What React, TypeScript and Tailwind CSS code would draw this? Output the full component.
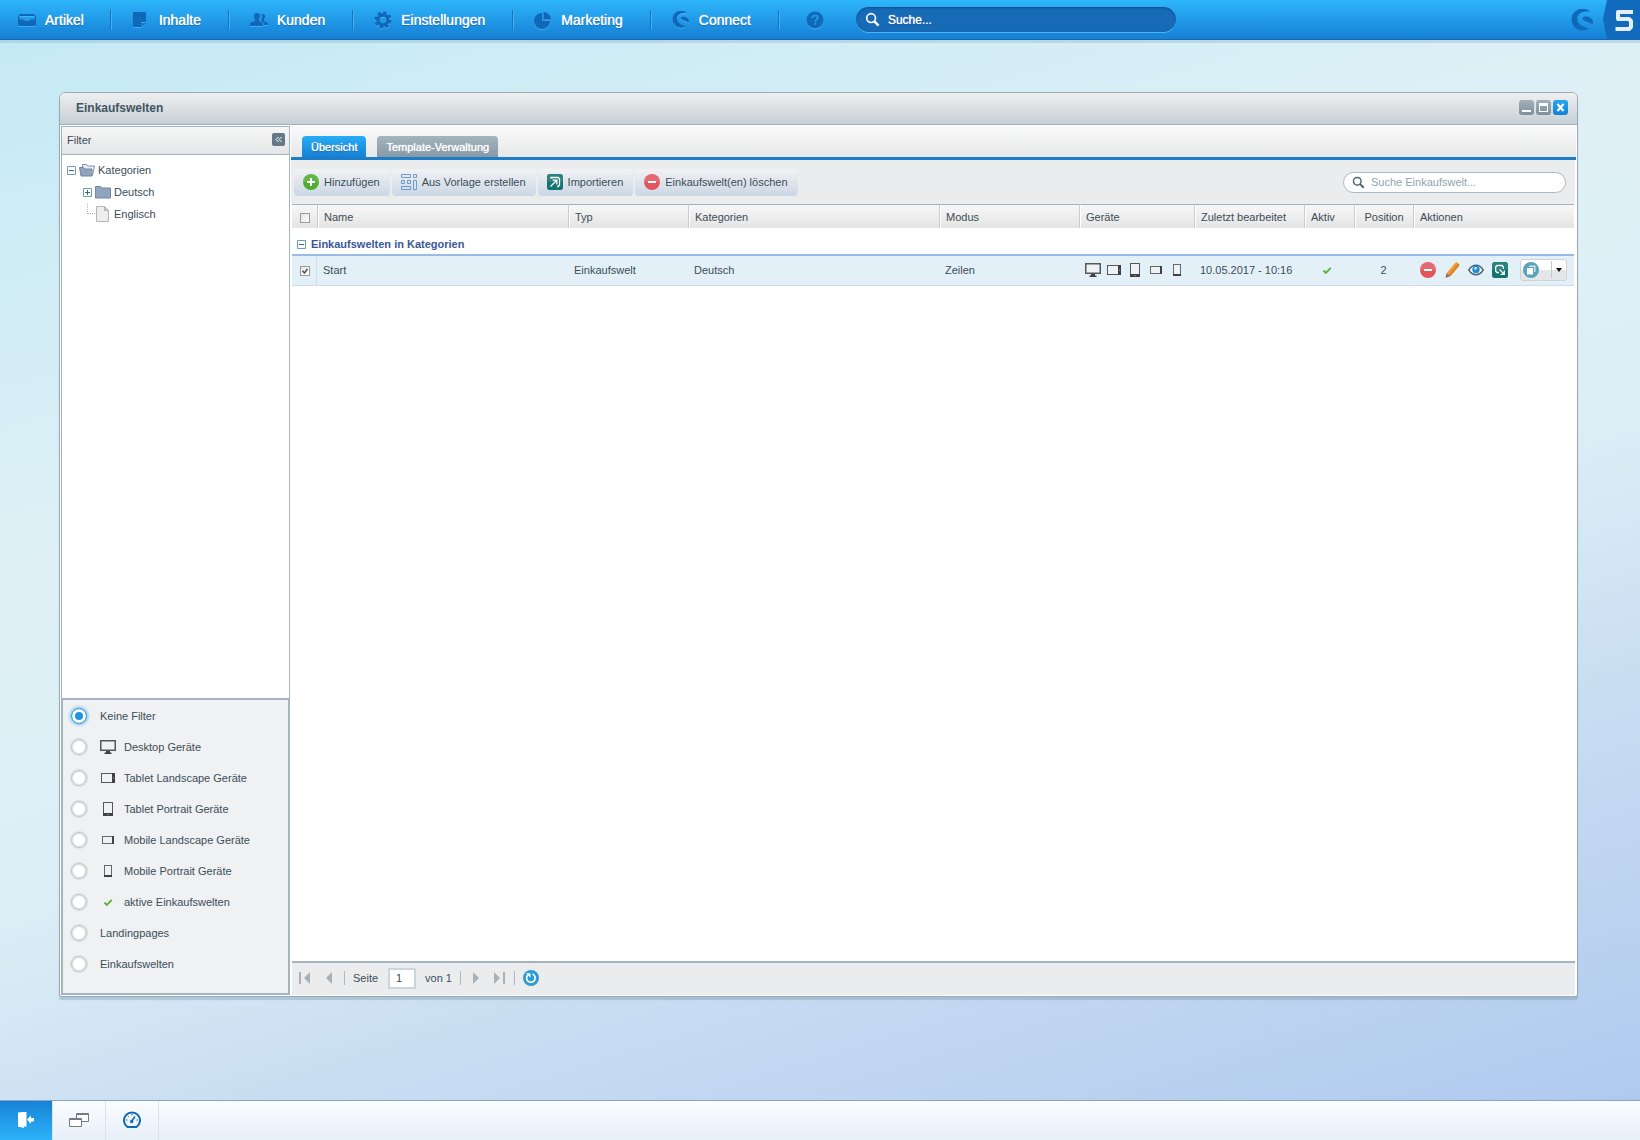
import type { ReactNode } from 'react';

const LABEL = 'text-[11px] leading-4';
const WHITE_GLOW = '[text-shadow:0_0_1px_rgba(255,255,255,1),0_1px_1px_rgba(0,50,110,0.6)]';

type DeviceKind = 'desktop' | 'tabletLandscape' | 'tabletPortrait' | 'mobileLandscape' | 'mobilePortrait';

function DeviceIcon({ kind }: { kind: DeviceKind }) {
  return (
    <svg viewBox="0 0 16 16" className="size-4 shrink-0" fill="none" aria-hidden>
      {kind === 'desktop' && (
        <>
          <rect x="0.75" y="1.75" width="14.5" height="9.5" fill="#eef2f4" stroke="#55585b" strokeWidth="1.5" />
          <path d="M6 12h4v1.500h1.500V15h-7v-1.500H6z" fill="#3f4245" />
        </>
      )}
      {kind === 'tabletLandscape' && (
        <>
          <rect x="1.5" y="3.5" width="13" height="9" fill="#eef2f4" stroke="#55585b" />
          <path d="M12 3h3v10h-3z" fill="#3f4245" />
          <path d="M13 7.5h1v1h-1z" fill="#aaa" />
        </>
      )}
      {kind === 'tabletPortrait' && (
        <>
          <rect x="3.5" y="1.5" width="9" height="13" fill="#eef2f4" stroke="#55585b" />
          <path d="M3 12h10v3H3z" fill="#3f4245" />
          <path d="M7.5 13h1v1h-1z" fill="#aaa" />
        </>
      )}
      {kind === 'mobileLandscape' && (
        <>
          <rect x="2.5" y="4.5" width="11" height="7" fill="#eef2f4" stroke="#66696c" />
          <path d="M12 4h2v8h-2z" fill="#3f4245" />
        </>
      )}
      {kind === 'mobilePortrait' && (
        <>
          <rect x="4.5" y="2.5" width="7" height="11" fill="#eef2f4" stroke="#66696c" />
          <path d="M4 12h8v2H4z" fill="#3f4245" />
        </>
      )}
    </svg>
  );
}

function CheckIcon() {
  return (
    <svg viewBox="0 0 16 16" className="size-4 shrink-0" fill="none" aria-hidden>
      <path d="M4.5 8.5l2.3 2.3 5-5" stroke="#5cb13a" strokeWidth="1.9" />
    </svg>
  );
}

function CircleIcon({ plus = false }: { plus?: boolean }) {
  return (
    <svg viewBox="0 0 16 16" className="size-4 shrink-0" aria-hidden>
      <circle cx="8" cy="8" r="8" fill={plus ? '#4fae2e' : '#e2555a'} />
      <path d="M0 8a8 8 0 0 1 16 0z" fill="#fff" opacity="0.12" />
      <path d={plus ? 'M7 4h2v3h3v2H9v3H7V9H4V7h3z' : 'M4 7h8v2H4z'} fill="#fff" />
    </svg>
  );
}

function TemplateIcon() {
  return (
    <svg viewBox="0 0 16 16" className="size-4 shrink-0" fill="none" stroke="#6f9bcb" aria-hidden>
      <path d="M.5.5h9v3h-9zM12.5.5h3v3h-3zM.5 6.5h3v3h-3zM6.5 6.5h3v3h-3zM12.5 6.5h3v9h-3zM.5 12.5h9v3h-9z" />
    </svg>
  );
}

function TealIcon({ out = false }: { out?: boolean }) {
  return (
    <svg viewBox="0 0 16 16" className="size-4 shrink-0" fill="none" stroke="#fff" strokeWidth="1.3" aria-hidden>
      <rect width="16" height="16" rx="2.5" fill="#14746f" stroke="none" />
      <rect width="16" height="8" rx="2.5" fill="#fff" stroke="none" opacity="0.1" />
      {out ? (
        <>
          <path d="M7 10.5H5L3.700 9.200V4.800L5 3.500h5L11.300 4.800V7" />
          <path d="M7.500 7.500l4.500 4.500M12.300 8.500v3.800H8.500" />
        </>
      ) : (
        <>
          <path d="M4 4.800V3.500h7.200l1.300 1.300V11l-1.300 1.500H10" />
          <path d="M3.500 12.500l6-6M5.500 6.200h4.300v4.300" />
        </>
      )}
    </svg>
  );
}

function PencilIcon() {
  return (
    <svg viewBox="0 0 16 16" className="size-4 shrink-0" aria-hidden>
      <path d="M11 1l1.500-.8 3 2L15 4 6.500 14l-4-2.800z" fill="#f0a030" />
      <path d="M13.500 1.500l1.800 1.300L15 4 6.500 14l-1.800-1.300z" fill="#d9852b" />
      <path d="M2.500 11.200l4 2.800L1.500 16z" fill="#8a6b55" />
    </svg>
  );
}

function EyeIcon() {
  return (
    <svg viewBox="0 0 16 16" className="size-4 shrink-0" aria-hidden>
      <path d="M.8 8C3 4.600 5.300 3.300 8 3.300S13 4.600 15.200 8C13 11.400 10.700 12.700 8 12.700S3 11.400.8 8z" fill="#fff" stroke="#4a6474" strokeWidth="1.4" />
      <circle cx="8" cy="7.500" r="3.700" fill="#1d8fd3" />
      <circle cx="7.500" cy="6.300" r="1.400" fill="#bfe5fa" />
    </svg>
  );
}

function Magnifier({ className }: { className: string }) {
  return (
    <svg viewBox="0 0 16 16" className={className} fill="none" stroke="currentColor" aria-hidden>
      <circle cx="6.5" cy="6.5" r="4.7" strokeWidth="1.8" />
      <path d="M10 10l4.500 4.500" strokeWidth="2.6" />
    </svg>
  );
}

function ShopwareShape() {
  return (
    <>
      <path d="M19.500 3C13 1.500 6.500 4 6.300 9.500 6.200 14.500 11 18 18 19.500A11 11 0 1 1 19.500 3z" />
      <path d="M11.500 9.500C11 6.500 20 6.500 22 12l-.5 3.500C19 12.800 12.200 12.500 11.500 9.500z" />
    </>
  );
}

function FolderIcon({ open = false }: { open?: boolean }) {
  return (
    <svg viewBox="0 0 16 14" className="h-3.5 w-4 shrink-0" aria-hidden>
      {open && <path d="M3.500 5V1.500h4l1 1.500h7l-2 9.500" fill="#e9eef3" stroke="#8196ad" />}
      <path d={open ? 'M.5 4.500h4l1 1.500h7.500v7H2z' : 'M.5 1.500h5L7 3h8.500v10H.5z'} fill="#8fa5bf" stroke="#7388a1" />
    </svg>
  );
}

function FileIcon() {
  return (
    <svg viewBox="0 0 16 16" className="size-4 shrink-0" aria-hidden>
      <path d="M1.500.5h8l4 4v11h-12z" fill="#ededed" stroke="#b5b5b5" />
      <path d="M9.500.5v4h4z" fill="#c9c9c9" stroke="#b5b5b5" />
    </svg>
  );
}

function ToggleBox({ plus = false }: { plus?: boolean }) {
  return (
    <svg viewBox="0 0 9 9" className="size-[9px] shrink-0 bg-white" fill="none" aria-hidden>
      <path d="M.5.5h8v8h-8z" stroke="#6f9db8" />
      <path d={plus ? 'M2 4.500h5M4.500 2v5' : 'M2 4.500h5'} stroke="#2b6e93" />
    </svg>
  );
}

const NAV: { label: string; icon: ReactNode }[] = [
  {
    label: 'Artikel',
    icon: <path d="M2 3h14l2 2.500V14l-1 1H1l-1-1V5.500zM1.500 5v3.500H5L7 10h4l2-1.500h3.500V5z" fillRule="evenodd" />,
  },
  { label: 'Inhalte', icon: <path d="M1 1h13v10H9.500v5H1zM10.500 12H14l-3.500 3.500z" /> },
  {
    label: 'Kunden',
    icon: (
      <path d="M7 2c2 0 3.200 1.400 3.100 3.300C10 7 9.400 7.800 9 8.200v2.100c1.800.8 3.800 1.200 3.800 2.700v2H0v-2c0-1.500 2.500-1.900 4.800-2.700V8.200c-.4-.4-1-1.200-1.100-2.900C3.600 3.400 4.800 2 7 2zm5.500 1c1.800 0 2.700 1.200 2.600 2.800-.1 1.500-.6 2.200-1 2.600v1.900c2 .6 3.900.9 3.900 2.500V14h-4.100c0-2-1-3-2.900-3.800.8-1.700 1.200-4.200.4-7z" />
    ),
  },
  {
    label: 'Einstellungen',
    icon: (
      <>
        <circle cx="9" cy="9" r="5" fill="none" stroke="currentColor" strokeWidth="3.4" />
        <circle cx="9" cy="9" r="7.4" fill="none" stroke="currentColor" strokeWidth="2.4" strokeDasharray="3.3 2.512" />
      </>
    ),
  },
  {
    label: 'Marketing',
    icon: <path d="M8 2v8h8A8 8 0 1 1 8 2zM9.500 1A7.500 7.500 0 0 1 17 8.500H9.500z" />,
  },
  {
    label: 'Connect',
    icon: (
      <g transform="scale(.77)">
        <ShopwareShape />
      </g>
    ),
  },
];

function TopBar() {
  return (
    <header className="flex h-10 items-center border-b border-[#0f68b8] bg-linear-to-b from-[#2eb6fb] to-[#167fd5] shadow-[0_3px_0_rgba(120,160,175,0.28)]">
      <nav className="flex items-center">
        {NAV.map((item, index) => (
          <button
            key={item.label}
            type="button"
            className={`flex h-5 items-center border-r border-[#49b0f2] shadow-[-1px_0_0_#1672c4_inset] ${index === 0 ? 'pr-[27px] pl-[18px]' : 'pr-7 pl-5'}`}
          >
            <svg
              viewBox="0 0 18 18"
              className="mr-[9px] size-[18px] fill-current text-[#0f68b9] drop-shadow-[0_1px_0_rgba(120,205,255,0.45)]"
              aria-hidden
            >
              {item.icon}
            </svg>
            <span className={`text-sm text-white ${WHITE_GLOW}`}>{item.label}</span>
          </button>
        ))}
      </nav>
      <button type="button" aria-label="Hilfe" className="ml-[26px] text-[#0f68b9]">
        <svg viewBox="0 0 18 18" className="size-[18px] drop-shadow-[0_1px_0_rgba(120,205,255,0.45)]" aria-hidden>
          <circle cx="9" cy="9" r="8.5" fill="currentColor" />
          <path d="M6.200 7c0-1.700 1.300-2.500 2.800-2.500s2.800.9 2.800 2.300c0 1.700-2.600 1.700-2.600 3.900" fill="none" stroke="#2596e6" strokeWidth="2" />
          <path d="M8.200 11.800h2v2h-2z" fill="#2596e6" />
        </svg>
      </button>
      <label className="ml-8 flex h-[25px] w-80 items-center rounded-full bg-[#176ab6] pl-[9px] shadow-[0_1px_0_#4db2f3,0_1px_2px_rgba(0,40,90,0.4)_inset]">
        <Magnifier className="size-[15px] text-white" />
        <input
          aria-label="Suche"
          placeholder="Suche..."
          className={`ml-2 w-60 bg-transparent text-xs text-white outline-none placeholder:text-white placeholder:opacity-100 ${WHITE_GLOW}`}
        />
      </label>
      <svg viewBox="0 0 22 22" className="ml-auto size-[22px] fill-[#0f68b9]" aria-hidden>
        <ShopwareShape />
      </svg>
      <svg viewBox="0 0 37 39" className="ml-2.5 h-[39px] w-[37px]" aria-hidden>
        <path d="M4 0h33v39H4L0 19z" fill="#116abb" />
        <path d="M30 12H15v7h11l2 2v6l-2 2H12.500" fill="none" stroke="#e4eff9" strokeWidth="4" strokeLinejoin="round" />
      </svg>
    </header>
  );
}

function TitleBar() {
  return (
    <div className="flex h-8 items-center rounded-t-[5px] border-b border-[#9db0bf] bg-linear-to-b from-[#efefef] to-[#c6cfd6] pr-[9px] pb-0.5 pl-4">
      <h1 className="grow text-xs font-bold text-[#42555f]">Einkaufswelten</h1>
      <div className="flex gap-0.5">
        <button type="button" aria-label="Minimieren" className="size-[15px] rounded-[3px] bg-linear-to-b from-[#a2b0ba] to-[#7e909d]">
          <svg viewBox="0 0 15 15" className="size-full"><path d="M3 10h9v2H3z" fill="#fff" /></svg>
        </button>
        <button type="button" aria-label="Maximieren" className="size-[15px] rounded-[3px] bg-linear-to-b from-[#a2b0ba] to-[#7e909d]">
          <svg viewBox="0 0 15 15" className="size-full"><path d="M3 3h9v9H3zm1 3v5h7V6z" fill="#fff" fillRule="evenodd" /></svg>
        </button>
        <button type="button" aria-label="Schließen" className="size-[15px] rounded-[3px] bg-linear-to-b from-[#27a8f2] to-[#0f80d4]">
          <svg viewBox="0 0 15 15" className="size-full"><path d="M4.500 4l6 7M10.500 4l-6 7" stroke="#fff" strokeWidth="2.2" /></svg>
        </button>
      </div>
    </div>
  );
}

const FILTERS: { label: string; icon?: DeviceKind | 'check' }[] = [
  { label: 'Keine Filter' },
  { label: 'Desktop Geräte', icon: 'desktop' },
  { label: 'Tablet Landscape Geräte', icon: 'tabletLandscape' },
  { label: 'Tablet Portrait Geräte', icon: 'tabletPortrait' },
  { label: 'Mobile Landscape Geräte', icon: 'mobileLandscape' },
  { label: 'Mobile Portrait Geräte', icon: 'mobilePortrait' },
  { label: 'aktive Einkaufswelten', icon: 'check' },
  { label: 'Landingpages' },
  { label: 'Einkaufswelten' },
];

function Sidebar() {
  return (
    <aside className="flex w-[229px] shrink-0 flex-col border border-[#a3b3bf]">
      <div className="flex h-7 items-center border-b border-[#a3b3bf] bg-linear-to-b from-[#f7f7f7] to-[#e4e5e6] pr-1 pb-0.5 pl-[5px]">
        <h2 className={`grow ${LABEL}`}>Filter</h2>
        <button type="button" aria-label="Filter einklappen" className="size-[13px] rounded-xs bg-[#64788a]">
          <svg viewBox="0 0 13 13" className="size-full" fill="none" stroke="#fff">
            <path d="M6.500 4L4 6.500 6.500 9M9.500 4L7 6.500 9.500 9" />
          </svg>
        </button>
      </div>
      <ul className={`grow bg-white pt-1 pl-[5px] ${LABEL}`}>
        <li>
          <div className="flex h-[22px] items-center">
            <ToggleBox />
            <span className="mx-[3px] flex"><FolderIcon open /></span>
            Kategorien
          </div>
          <ul className="pl-4">
            <li className="flex h-[22px] items-center">
              <ToggleBox plus />
              <span className="mx-[3px] flex"><FolderIcon /></span>
              Deutsch
            </li>
            <li className="flex h-[22px] items-center">
              <span className="mb-[11px] ml-1 h-[11px] w-2 border-b border-l border-dotted border-[#b5b5b5]" />
              <span className="mr-[3px] flex"><FileIcon /></span>
              Englisch
            </li>
          </ul>
        </li>
      </ul>
      <fieldset className="h-[296px] border border-t-2 border-[#a3b3bf] bg-[#eff1f3]">
        {FILTERS.map((filter, index) => (
          <label key={filter.label} className={`flex h-[31px] items-center pl-2 ${LABEL}`}>
            <input
              type="radio"
              name="filter"
              defaultChecked={index === 0}
              className="mr-[13px] size-4 appearance-none rounded-full border border-[#c3c8cd] bg-white shadow-[0_0_1px_1px_#dcdfe2,0_0_1px_1px_#dcdfe2_inset] checked:border-[#4ba6e0] checked:bg-[#1e94dc] checked:shadow-[0_0_2px_2px_#a5d5f5,0_0_0_3px_#fff_inset]"
            />
            {filter.icon && (
              <span className="mr-2 flex">
                {filter.icon === 'check' ? <CheckIcon /> : <DeviceIcon kind={filter.icon} />}
              </span>
            )}
            {filter.label}
          </label>
        ))}
      </fieldset>
    </aside>
  );
}

const TOOLS: { label: string; icon: ReactNode }[] = [
  { label: 'Hinzufügen', icon: <CircleIcon plus /> },
  { label: 'Aus Vorlage erstellen', icon: <TemplateIcon /> },
  { label: 'Importieren', icon: <TealIcon /> },
  { label: 'Einkaufswelt(en) löschen', icon: <CircleIcon /> },
];

function Toolbar() {
  return (
    <div className="flex h-11 items-center justify-between border-r border-white bg-[#ebecee] pr-[9px] pl-[3px]">
      <div className="flex gap-0.5">
        {TOOLS.map((tool) => (
          <button
            key={tool.label}
            type="button"
            className={`flex h-[27px] items-center gap-[5px] rounded-[4px] bg-linear-to-b from-[#f1f2f4] to-[#cbd7e5] pr-2.5 pl-[9px] ${LABEL}`}
          >
            {tool.icon}
            {tool.label}
          </button>
        ))}
      </div>
      <label className="flex h-[21px] w-[223px] items-center rounded-full border border-[#a9bac7] bg-white pl-2">
        <Magnifier className="size-[13px] text-[#4f6676]" />
        <input
          aria-label="Suche Einkaufswelt"
          placeholder="Suche Einkaufswelt..."
          className={`ml-1.5 w-44 bg-transparent outline-none placeholder:text-[#8fa3b1] placeholder:opacity-100 ${LABEL}`}
        />
      </label>
    </div>
  );
}

function RowCheckbox({ label, checked = false }: { label: string; checked?: boolean }) {
  return (
    <span className="relative block size-2.5">
      <input
        type="checkbox"
        aria-label={label}
        defaultChecked={checked}
        className="peer block size-2.5 appearance-none border border-[#9a9a9a] bg-linear-to-br from-[#e4e4e4] to-white"
      />
      <svg
        viewBox="0 0 10 10"
        className="pointer-events-none absolute inset-0 hidden size-2.5 peer-checked:block"
        fill="none"
        stroke="#444"
        aria-hidden
      >
        <path d="M2.500 4.800l2 2.200 3-4" strokeWidth="1.3" />
      </svg>
    </span>
  );
}

const COLUMNS = ['Name', 'Typ', 'Kategorien', 'Modus', 'Geräte', 'Zuletzt bearbeitet', 'Aktiv', 'Position', 'Aktionen'];
const DEVICES: DeviceKind[] = ['desktop', 'tabletLandscape', 'tabletPortrait', 'mobileLandscape', 'mobilePortrait'];

function Grid() {
  return (
    <table className={`w-full table-fixed border-separate border-spacing-0 ${LABEL}`}>
      <colgroup>
        <col className="w-[25px]" />
        <col className="w-[251px]" />
        <col className="w-[120px]" />
        <col className="w-[251px]" />
        <col className="w-[140px]" />
        <col className="w-[115px]" />
        <col className="w-[110px]" />
        <col className="w-[50px]" />
        <col className="w-[59px]" />
        <col />
      </colgroup>
      <thead>
        <tr className="h-6 bg-linear-to-b from-[#f8f8f8] to-[#e4e4e5]">
          <th className="border-t border-[#a3b3bf] pt-0.5 pl-2">
            <RowCheckbox label="Alle auswählen" />
          </th>
          {COLUMNS.map((column) => (
            <th
              key={column}
              className={`border-t border-l border-t-[#a3b3bf] border-l-[#c9cccf] font-normal whitespace-nowrap shadow-[1px_0_0_#fff_inset] ${column === 'Position' ? 'text-center' : 'pl-1.5 text-left'}`}
            >
              {column}
            </th>
          ))}
        </tr>
      </thead>
      <tbody>
        <tr className="h-7">
          <th colSpan={10} className="border-b-2 border-[#99bbe8] pt-1.5 text-left">
            <button type="button" className="flex items-center gap-[5px] pl-[5px] font-bold text-[#3a5795]">
              <ToggleBox />
              Einkaufswelten in Kategorien
            </button>
          </th>
        </tr>
        <tr className="h-[30px] bg-[#e4f0f7] *:border-b *:border-[#cddfeb] *:pb-0.5">
          <td className="border-r border-r-[#d3e0ea] pt-0.5 pl-2">
            <RowCheckbox label="Start auswählen" checked />
          </td>
          <td className="pl-1.5">Start</td>
          <td className="pl-1.5">Einkaufswelt</td>
          <td className="pl-1.5">Deutsch</td>
          <td className="pl-1.5">Zeilen</td>
          <td className="pl-1.5">
            <span className="flex gap-[5px]">
              {DEVICES.map((kind) => (
                <DeviceIcon key={kind} kind={kind} />
              ))}
            </span>
          </td>
          <td className="pl-1.5 whitespace-nowrap">10.05.2017 - 10:16</td>
          <td className="pl-[15px]">
            <CheckIcon />
          </td>
          <td className="text-center">2</td>
          <td className="pl-[7px]">
            <span className="flex items-center gap-2">
              <button type="button" aria-label="Löschen"><CircleIcon /></button>
              <button type="button" aria-label="Bearbeiten"><PencilIcon /></button>
              <button type="button" aria-label="Vorschau"><EyeIcon /></button>
              <button type="button" aria-label="Exportieren"><TealIcon out /></button>
              <button
                type="button"
                aria-label="Duplizieren"
                className="ml-1 flex h-[22px] w-[47px] items-center rounded-[3px] border border-[#d0d3d6] bg-linear-to-b from-white from-50% to-[#e6e6e8] to-50% pl-0.5"
              >
                <svg viewBox="0 0 16 16" className="size-4" aria-hidden>
                  <circle cx="8" cy="8" r="8" fill="#5aa3b8" />
                  <path d="M6 3.500h6.500V10H11V5H6z" fill="#cfe5ec" />
                  <path d="M4 6h6v6.500H4z" fill="#fff" />
                </svg>
                <span className="ml-3 h-[17px] w-px bg-[#c6c9cc]" />
                <svg viewBox="0 0 6 4" className="ml-1 h-1 w-1.5" aria-hidden><path d="M0 0h6L3 4z" fill="#111" /></svg>
              </button>
            </span>
          </td>
        </tr>
      </tbody>
    </table>
  );
}

function PagingButton({ label, d, className }: { label: string; d: string; className?: string }) {
  return (
    <button type="button" aria-label={label} className={className}>
      <svg viewBox="0 0 12 12" className="size-3" fill="#a9b1b8" aria-hidden>
        <path d={d} />
      </svg>
    </button>
  );
}

function Paging() {
  return (
    <div className={`mr-px ml-px flex h-[34px] shrink-0 items-center border-t-2 border-[#a3b3bf] bg-[#ebecee] pb-0.5 pl-[7px] ${LABEL}`}>
      <PagingButton label="Erste Seite" d="M0 0h2v12H0zM11 0v12L5 6z" />
      <PagingButton label="Vorherige Seite" className="ml-3.5" d="M7 0v12L1 6z" />
      <span className="ml-[7px] h-3.5 w-px bg-[#b0bac3]" />
      <label className="ml-2 flex items-center gap-2.5">
        Seite
        <input
          defaultValue="1"
          className="h-[21px] w-7 border-2 border-[#cdd5dc] bg-white pl-1.5 outline-none"
        />
      </label>
      <span className="ml-[9px]">von 1</span>
      <span className="ml-2 h-3.5 w-px bg-[#b0bac3]" />
      <PagingButton label="Nächste Seite" className="ml-2.5" d="M2 0l6 6-6 6z" />
      <PagingButton label="Letzte Seite" className="ml-[11px]" d="M0 0l6 6-6 6zM9 0h2v12H9z" />
      <span className="ml-2 h-3.5 w-px bg-[#b0bac3]" />
      <button type="button" aria-label="Aktualisieren" className="ml-2">
        <svg viewBox="0 0 16 16" className="size-4" aria-hidden>
          <circle cx="8" cy="8" r="8" fill="#2b9bd2" />
          <path d="M9.500 4a4.300 4.300 0 1 1-4.700 1" fill="none" stroke="#fff" strokeWidth="1.7" />
          <path d="M3 3.200h4.500v4.500z" fill="#fff" />
        </svg>
      </button>
    </div>
  );
}

function EmotionWindow() {
  return (
    <section className="mt-[52px] mr-[62px] mb-[103px] ml-[59px] flex grow flex-col rounded-t-[6px] rounded-b-[3px] border border-[#98aaba] bg-white shadow-[0_3px_1px_rgba(110,140,160,0.35)]">
      <TitleBar />
      <div className="flex grow p-px">
        <Sidebar />
        <div className="flex min-w-0 grow flex-col pl-px">
          <div
            className="flex h-[34px] items-end gap-[11px] border-b-[3px] border-[#1b7cc9] bg-linear-to-b from-[#fafafa] to-[#e6e7e8] pl-[11px]"
            role="tablist"
          >
            <button
              type="button"
              role="tab"
              aria-selected="true"
              className={`h-[21px] rounded-t-[4px] bg-linear-to-b from-[#27acf5] to-[#1681d5] px-[9px] text-white ${LABEL} ${WHITE_GLOW}`}
            >
              Übersicht
            </button>
            <button
              type="button"
              role="tab"
              aria-selected="false"
              className={`h-[21px] rounded-t-[4px] bg-linear-to-b from-[#a5b5bf] to-[#8799a5] px-[9px] text-white ${LABEL} [text-shadow:0_0_1px_rgba(255,255,255,1)]`}
            >
              Template-Verwaltung
            </button>
          </div>
          <Toolbar />
          <div className="grow pr-0.5 pl-px">
            <Grid />
          </div>
          <Paging />
        </div>
      </div>
    </section>
  );
}

function Taskbar() {
  return (
    <footer className="flex h-10 border-t border-[#8aa5be] bg-linear-to-b from-[#fbfcfe] to-[#e7eff9]">
      <button type="button" aria-label="Abmelden" className="flex w-[52px] items-center justify-center bg-linear-to-b from-[#1782d6] to-[#2db3f9] pb-0.5">
        <svg viewBox="0 0 16 16" className="size-4 fill-white" aria-hidden>
          <path d="M0 .5L5 0h3.500v14.500H6V16l-6-1.500zM9 7.500l4-4V6h3v3.500h-3V12z" />
        </svg>
      </button>
      <button type="button" aria-label="Fenster" className="flex w-[54px] items-center justify-center border-x border-[#dbe2ea] pb-0.5">
        <svg viewBox="0 0 20 16" className="h-4 w-5" fill="#fff" stroke="#747b82" aria-hidden>
          <path d="M7.500 1.500h12v8h-12z" />
          <path d="M8 2h11" strokeWidth="2" />
          <path d="M.5 6.500h12v8H.5z" />
          <path d="M1 7h11" strokeWidth="2" />
        </svg>
      </button>
      <button type="button" aria-label="Performance" className="flex w-[53px] items-center justify-center border-r border-[#dbe2ea] pb-0.5">
        <svg viewBox="0 0 18 18" className="size-[18px]" fill="none" stroke="#1069b4" aria-hidden>
          <path d="M4.500 16A8 8 0 1 1 13.500 16z" strokeWidth="2" />
          <path d="M8.500 10.500l3.500-5" strokeWidth="1.6" />
          <circle cx="8.7" cy="10.5" r="1" strokeWidth="1.5" />
          <path d="M9 3v1.500M3 9h1.500M13.500 9H15M4.800 4.800l1 1" />
        </svg>
      </button>
    </footer>
  );
}

export default function App() {
  return (
    <div className="flex min-h-screen flex-col bg-[linear-gradient(163deg,#c3e9f4_0%,#def0f6_35%,#dceff6_55%,#c9ddf2_72%,#adc7ee_100%)] font-['Liberation_Sans',Arial,sans-serif] text-[#3b4d58]">
      <TopBar />
      <EmotionWindow />
      <Taskbar />
    </div>
  );
}
